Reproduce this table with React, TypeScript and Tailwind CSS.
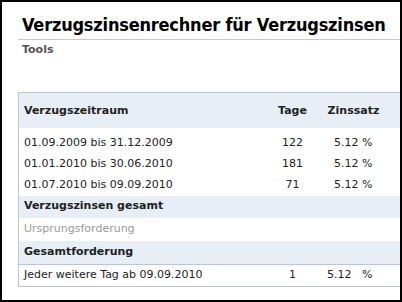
const rows = [
  { period: "01.09.2009 bis 31.12.2009", days: "122", rate: "5.12 %" },
  { period: "01.01.2010 bis 30.06.2010", days: "181", rate: "5.12 %" },
  { period: "01.07.2010 bis 09.09.2010", days: "71", rate: "5.12 %" },
];

export default function App() {
  return (
    <div className="h-[302px] w-[402px] overflow-hidden border-2 border-black bg-white font-['DejaVu_Sans',Verdana,sans-serif] text-[11px] text-[#222]">
      <div className="pl-4 pt-[12px]">
        <h1 className="whitespace-nowrap border-b border-[#c8c8c8] pb-[3px] pl-[4px] font-['DejaVu_Sans_Condensed','DejaVu_Sans',sans-serif] text-[18px] font-bold leading-[22px] tracking-[-0.2px] text-black">
          Verzugszinsenrechner für Verzugszinsen
        </h1>
        <p className="mt-[3px] pl-[4px] text-[11px] font-bold leading-[14px] text-[#555]">Tools</p>

        <table className="mt-[35px] w-[440px] table-fixed border-collapse border border-[#b9c6d6]">
          <colgroup>
            <col className="w-[250px]" />
            <col className="w-[48px]" />
            <col className="w-[74px]" />
            <col />
          </colgroup>
          <thead>
            <tr className="h-[35px] bg-[#e8eef6] font-bold">
              <th className="pl-[5px] pt-[2px] text-left">Verzugszeitraum</th>
              <th className="pt-[2px] text-center">Tage</th>
              <th className="pt-[2px] text-center">Zinssatz</th>
              <th />
            </tr>
          </thead>
          <tbody>
            {rows.map((row, i) => (
              <tr key={row.period} className={i === 0 ? "h-[26px]" : "h-[21px]"}>
                <td className={`pl-[5px] ${i === 0 ? "pt-[5px]" : ""}`}>{row.period}</td>
                <td className={`text-center ${i === 0 ? "pt-[5px]" : ""}`}>{row.days}</td>
                <td className={`pr-[18px] text-right ${i === 0 ? "pt-[5px]" : ""}`}>{row.rate}</td>
                <td />
              </tr>
            ))}
            <tr className="h-[22px] bg-[#e8eef6] font-bold">
              <td className="pl-[5px]" colSpan={4}>Verzugszinsen gesamt</td>
            </tr>
            <tr className="h-[23px] text-[#9a9a9a]">
              <td className="pl-[5px]" colSpan={4}>Ursprungsforderung</td>
            </tr>
            <tr className="h-[24px] bg-[#e8eef6] font-bold">
              <td className="pl-[5px]" colSpan={4}>Gesamtforderung</td>
            </tr>
            <tr className="h-[22px] border-t border-[#b9c6d6]">
              <td className="pl-[5px]">Jeder weitere Tag ab 09.09.2010</td>
              <td className="text-center">1</td>
              <td className="whitespace-pre pr-[18px] text-right">5.12   %</td>
              <td />
            </tr>
          </tbody>
        </table>
      </div>
    </div>
  );
}
